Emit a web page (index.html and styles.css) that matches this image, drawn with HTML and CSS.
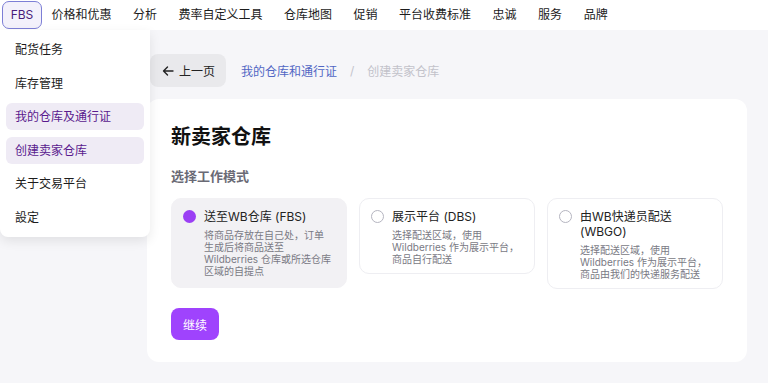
FILE: index.html
```html
<!DOCTYPE html>
<html lang="zh">
<head>
    <meta charset="UTF-8">
    <meta name="viewport" content="width=device-width, initial-scale=1.0">
    <title>新卖家仓库</title>
    <link rel="stylesheet" href="styles.css">
</head>
<body>
    <nav class="topnav">
        <span class="nav-item nav-active">FBS</span>
        <span class="nav-item">价格和优惠</span>
        <span class="nav-item">分析</span>
        <span class="nav-item">费率自定义工具</span>
        <span class="nav-item">仓库地图</span>
        <span class="nav-item">促销</span>
        <span class="nav-item">平台收费标准</span>
        <span class="nav-item">忠诚</span>
        <span class="nav-item">服务</span>
        <span class="nav-item">品牌</span>
    </nav>

    <!-- dropdown under FBS -->
    <div class="dropdown">
        <div class="dd-item">配货任务</div>
        <div class="dd-item">库存管理</div>
        <div class="dd-item dd-selected">我的仓库及通行证</div>
        <div class="dd-item dd-selected">创建卖家仓库</div>
        <div class="dd-item">关于交易平台</div>
        <div class="dd-item">設定</div>
    </div>

    <main class="content">
        <div class="crumbs">
            <button class="back-btn">
                <svg width="14" height="14" viewBox="0 0 14 14"><path d="M12 7H2.5M6.5 3L2.5 7l4 4" fill="none" stroke="#222" stroke-width="1.4" stroke-linecap="round" stroke-linejoin="round"/></svg>
                上一页
            </button>
            <span class="crumb-link">我的仓库和通行证</span>
            <span class="crumb-sep">/</span>
            <span class="crumb-current">创建卖家仓库</span>
        </div>

        <section class="panel">
            <h1 class="panel-title">新卖家仓库</h1>
            <div class="panel-sub">选择工作模式</div>
            <div class="modes">
                <div class="mode mode-checked">
                    <span class="radio radio-on"></span>
                    <div class="mode-body">
                        <div class="mode-title">送至WB仓库 (FBS)</div>
                        <div class="mode-desc">将商品存放在自己处，订单<br>生成后将商品送至<br>Wildberries 仓库或所选仓库<br>区域的自提点</div>
                    </div>
                </div>
                <div class="mode">
                    <span class="radio"></span>
                    <div class="mode-body">
                        <div class="mode-title">展示平台 (DBS)</div>
                        <div class="mode-desc">选择配送区域，使用<br>Wildberries 作为展示平台，<br>商品自行配送</div>
                    </div>
                </div>
                <div class="mode">
                    <span class="radio"></span>
                    <div class="mode-body">
                        <div class="mode-title">由WB快递员配送<br>(WBGO)</div>
                        <div class="mode-desc">选择配送区域，使用<br>Wildberries 作为展示平台，<br>商品由我们的快递服务配送</div>
                    </div>
                </div>
            </div>
            <button class="next-btn">继续</button>
        </section>
    </main>
</body>
</html>
```

FILE: styles.css
```css
* {
    box-sizing: border-box;
}
body {
    margin: 0;
    background-color: #f6f6f9;
    font-family: Inter, "Noto Sans CJK SC", sans-serif;
    color: #222;
    height: 383px;
    overflow: hidden;
}
.topnav {
    height: 30px;
    background-color: #fff;
    display: flex;
    align-items: center;
    padding-left: 2px;
    gap: 21.5px;
}
.nav-item {
    font-size: 12px;
    line-height: 26px;
    color: #1c1c1c;
}
.nav-active {
    width: 40px;
    text-align: center;
    border: 1px solid #7d7fd6;
    border-radius: 7px;
    color: #4a1b7a;
    background-color: #f3f1fb;
    margin-right: -12px;
}
.dropdown {
    position: absolute;
    left: 0;
    top: 30px;
    width: 150px;
    background-color: #fff;
    border-radius: 0 0 8px 8px;
    box-shadow: 0 4px 12px rgba(0, 0, 0, 0.09);
    padding: 6px 6px 6px;
    z-index: 5;
}
.dd-item {
    font-size: 12px;
    height: 27px;
    line-height: 27px;
    padding-left: 9px;
    margin-bottom: 6.5px;
    border-radius: 6px;
    color: #1c1c1c;
}
.dd-item:last-child {
    margin-bottom: 0;
}
.dd-selected {
    background-color: #efebf5;
    color: #5a1a8e;
}
.content {
    padding: 24px 21px 0 147px;
}
.crumbs {
    display: flex;
    align-items: center;
    height: 33px;
    margin-bottom: 12px;
}
.back-btn {
    margin-left: 3px;
    height: 33px;
    width: 76px;
    border: none;
    border-radius: 8px;
    background-color: #e9e9ec;
    font-family: inherit;
    font-size: 12px;
    color: #222;
    display: flex;
    align-items: center;
    justify-content: center;
    gap: 4px;
    padding: 0;
}
.crumb-link {
    margin-left: 15px;
    font-size: 12px;
    color: #5166c4;
}
.crumb-sep {
    margin: 0 13px;
    font-size: 12px;
    color: #c4c4cc;
}
.crumb-current {
    font-size: 12px;
    color: #c2c2ca;
}
.panel {
    background-color: #fff;
    border-radius: 12px;
    height: 263px;
    padding: 24px 24px;
}
.panel-title {
    margin: 0;
    font-size: 20px;
    font-weight: 700;
    color: #111;
    line-height: 28px;
}
.panel-sub {
    margin-top: 17px;
    font-size: 13px;
    font-weight: 600;
    color: #6a6a75;
    line-height: 16px;
}
.modes {
    margin-top: 14px;
    display: flex;
    gap: 12px;
    align-items: flex-start;
}
.mode {
    width: 176px;
    border: 1px solid #eeeef2;
    border-radius: 10px;
    padding: 10px 8px 8px 11px;
    display: flex;
    gap: 8px;
}
.mode-checked {
    background-color: #f2f1f4;
    border-color: #f2f1f4;
    padding-bottom: 10px;
}
.radio {
    flex: none;
    width: 13px;
    height: 13px;
    margin-top: 1px;
    border-radius: 50%;
    border: 1.5px solid #b5b5c0;
}
.radio-on {
    border: none;
    background-color: #9b3ff4;
}
.mode-body {
    white-space: nowrap;
}
.mode-title {
    font-size: 12px;
    line-height: 15px;
    color: #222;
}
.mode-desc {
    margin-top: 5px;
    font-size: 10px;
    line-height: 12px;
    color: #7a7a84;
}
.next-btn {
    margin-top: 19px;
    width: 48px;
    height: 32px;
    border: none;
    border-radius: 8px;
    background-color: #9f43fd;
    color: #fff;
    font-family: inherit;
    font-size: 12px;
    padding: 0;
}
```
